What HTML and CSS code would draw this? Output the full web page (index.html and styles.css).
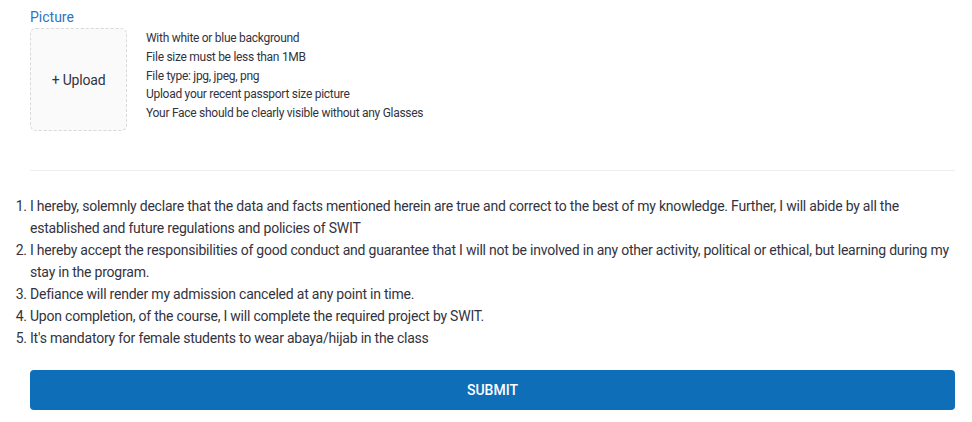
FILE: index.html
```html
<!DOCTYPE html>
<html>
<head>
<meta charset="utf-8">
<link rel="stylesheet" href="styles.css">
</head>
<body>
<div class="page">
  <div class="field">
    <div class="label">Picture</div>
    <div class="picture-row">
      <div class="upload">+ Upload</div>
      <ul class="hints">
        <li>With white or blue background</li>
        <li>File size must be less than 1MB</li>
        <li>File type: jpg, jpeg, png</li>
        <li>Upload your recent passport size picture</li>
        <li>Your Face should be clearly visible without any Glasses</li>
      </ul>
    </div>
  </div>
  <hr class="divider">
  <ol class="terms">
    <li>I hereby, solemnly declare that the data and facts mentioned herein are true and correct to the best of my knowledge. Further, I will abide by all the established and future regulations and policies of SWIT</li>
    <li>I hereby accept the responsibilities of good conduct and guarantee that I will not be involved in any other activity, political or ethical, but learning during my stay in the program.</li>
    <li>Defiance will render my admission canceled at any point in time.</li>
    <li>Upon completion, of the course, I will complete the required project by SWIT.</li>
    <li>It's mandatory for female students to wear abaya/hijab in the class</li>
  </ol>
  <button class="submit">SUBMIT</button>
</div>
</body>
</html>
```
FILE: styles.css
```css
* { box-sizing: border-box; }
html, body { margin: 0; padding: 0; background: #fff; }
body {
  font-family: Roboto, "Liberation Sans", sans-serif;
  color: #333340;
  font-size: 14px;
}
.page {
  width: 925px;
  margin-left: 30px;
  padding-top: 8px;
}
.label {
  color: #2f74c0;
  font-size: 14px;
  line-height: 18px;
  height: 20px;
}
.picture-row {
  display: flex;
  gap: 19px;
}
.upload {
  width: 97px;
  height: 103px;
  border: 1px dashed #d9d9d9;
  border-radius: 6px;
  background: #fafafa;
  display: flex;
  align-items: center;
  justify-content: center;
  font-size: 14px;
  letter-spacing: -0.2px;
}
.hints {
  list-style: none;
  margin: 0;
  padding: 0;
  font-size: 12px;
  line-height: 18.75px;
  margin-top: 1px;
  letter-spacing: -0.28px;
}
.divider {
  border: none;
  border-top: 1px solid #eeeeee;
  margin: 39px 0 0 0;
  height: 0;
}
.terms {
  margin: 24px 0 0 0;
  padding: 0;
  list-style-position: outside;
  line-height: 22px;
  font-size: 14px;
  letter-spacing: -0.22px;
}
.submit {
  display: block;
  width: 100%;
  height: 40px;
  margin-top: 21px;
  background: #0e6eb8;
  color: #fff;
  border: none;
  border-radius: 4px;
  font-family: inherit;
  font-size: 14px;
  font-weight: 500;
}
```
